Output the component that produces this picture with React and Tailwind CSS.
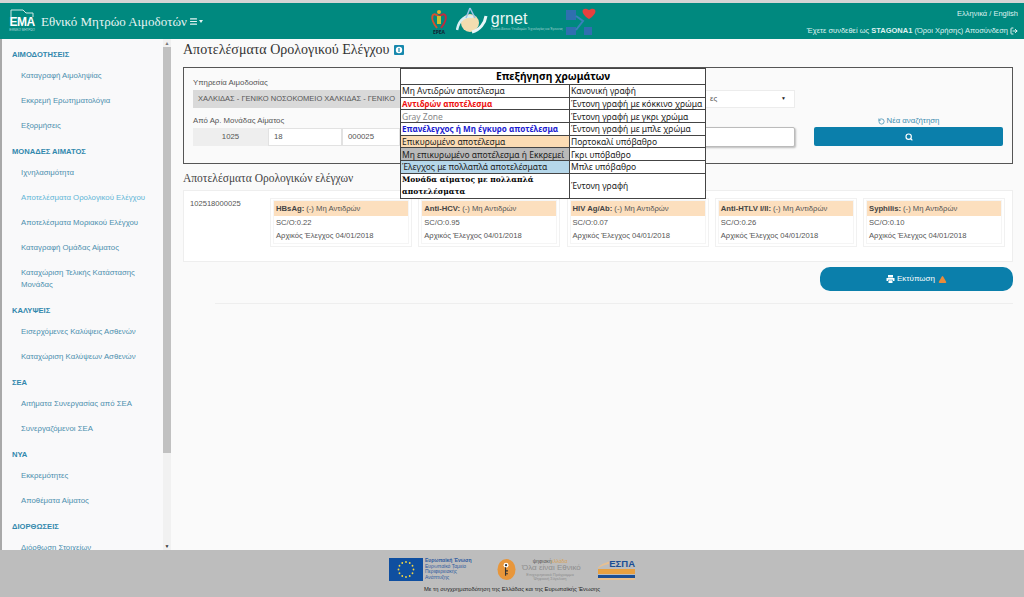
import React from "react";
import { Menu, LogOut, RotateCcw, Search, TriangleAlert } from "lucide-react";

const sans = "font-['Liberation_Sans',Arial,sans-serif]";

const menu = [
  {
    title: "ΑΙΜΟΔΟΤΗΣΕΙΣ",
    items: ["Καταγραφή Αιμοληψίας", "Εκκρεμή Ερωτηματολόγια", "Εξορμήσεις"],
  },
  {
    title: "ΜΟΝΑΔΕΣ ΑΙΜΑΤΟΣ",
    items: [
      "Ιχνηλασιμότητα",
      "Αποτελέσματα Ορολογικού Ελέγχου",
      "Αποτελέσματα Μοριακού Ελέγχου",
      "Καταγραφή Ομάδας Αίματος",
      "Καταχώριση Τελικής Κατάστασης Μονάδας",
    ],
  },
  {
    title: "ΚΑΛΥΨΕΙΣ",
    items: ["Εισερχόμενες Καλύψεις Ασθενών", "Καταχώριση Καλύψεων Ασθενών"],
  },
  {
    title: "ΣΕΑ",
    items: ["Αιτήματα Συνεργασίας από ΣΕΑ", "Συνεργαζόμενοι ΣΕΑ"],
  },
  {
    title: "ΝΥΑ",
    items: ["Εκκρεμότητες", "Αποθέματα Αίματος"],
  },
  {
    title: "ΔΙΟΡΘΩΣΕΙΣ",
    items: ["Διόρθωση Στοιχείων"],
  },
];

const tests = [
  { name: "HBsAg:", sco: "0.22" },
  { name: "Anti-HCV:", sco: "0.95" },
  { name: "HIV Ag/Ab:", sco: "0.07" },
  { name: "Anti-HTLV I/II:", sco: "0.26" },
  { name: "Syphilis:", sco: "0.10" },
];

const legend = [
  { left: "Μη Αντιδρών αποτέλεσμα", right: "Κανονική γραφή", cls: "text-[#222]" },
  { left: "Αντιδρών αποτέλεσμα", right: "Έντονη γραφή με κόκκινο χρώμα", cls: "text-[#ee1111] font-bold text-[8.1px]" },
  { left: "Gray Zone", right: "Έντονη γραφή με γκρι χρώμα", cls: "text-[#888]" },
  { left: "Επανέλεγχος ή Μη έγκυρο αποτέλεσμα", right: "Έντονη γραφή με μπλε χρώμα", cls: "text-[#1a1ad0] font-bold text-[8.1px]" },
  { left: "Επικυρωμένο αποτέλεσμα", right: "Πορτοκαλί υπόβαθρο", cls: "text-[#222] bg-[#fcdcb4]" },
  { left: "Μη επικυρωμένο αποτέλεσμα ή Εκκρεμεί", right: "Γκρι υπόβαθρο", cls: "text-[#222] bg-[#b9b9b9]" },
  { left: "Έλεγχος με πολλαπλά αποτελέσματα", right: "Μπλε υπόβαθρο", cls: "text-[#222] bg-[#b5d7ea]" },
];

const Sidebar = () => (
  <aside className={`flex w-[171px] shrink-0 overflow-hidden border-l-2 border-[#a9a9a9] bg-[#f9f9fa] ${sans}`}>
    <nav className="w-[161px] shrink-0 pl-[10px] pt-[2px]">
      {menu.map((group) => (
        <div key={group.title}>
          <div className="mt-[5px] flex h-[17px] items-center text-[7.6px] font-bold text-[#3288ad]">{group.title}</div>
          {group.items.map((item) => (
            <div
              key={item}
              className={`py-[6.5px] pl-[9px] pr-[10px] text-[7.8px] leading-[12px] ${
                item === "Αποτελέσματα Ορολογικού Ελέγχου" ? "text-[#62b5d6]" : "text-[#4c8fae]"
              }`}
            >
              {item}
            </div>
          ))}
        </div>
      ))}
    </nav>
    {/* scrollbar */}
    <div className="flex w-[8px] shrink-0 flex-col items-center bg-[#f1f1f1]">
      <div className="h-[8px] text-[5px] leading-[8px] text-[#777]">▲</div>
      <div className="h-[406px] w-full bg-[#c1c1c1]" />
      <div className="flex-1" />
      <div className="h-[8px] text-[5px] leading-[8px] text-[#333]">▼</div>
    </div>
  </aside>
);

const Legend = () => (
  <table className="absolute left-[400px] top-[68px] w-[306px] table-fixed border-collapse bg-white font-['Noto_Sans',sans-serif] text-[8.5px] leading-[11px] text-[#222]">
    <colgroup>
      <col className="w-[169px]" />
      <col />
    </colgroup>
    <tbody>
      <tr className="h-[16px]">
        <td colSpan={2} className="border border-[#444] text-center text-[10.3px] font-bold text-black">
          Επεξήγηση χρωμάτων
        </td>
      </tr>
      {legend.map((row) => (
        <tr key={row.left} className="h-[12.7px]">
          <td className={`whitespace-nowrap border border-[#444] pl-[1px] ${row.cls}`}>{row.left}</td>
          <td className="whitespace-nowrap border border-[#444] pl-[1px]">{row.right}</td>
        </tr>
      ))}
      <tr className="h-[25px]">
        <td className="border border-[#444] pl-[1px] font-['DejaVu_Serif',serif] text-[7.5px] font-bold leading-[12px] text-black">
          Μονάδα αίματος με πολλαπλά αποτελέσματα
        </td>
        <td className="border border-[#444] pl-[1px]">Έντονη γραφή</td>
      </tr>
    </tbody>
  </table>
);

const SearchBox = () => (
  <div className={`mt-[6px] flex h-[97px] overflow-hidden border border-[#555] bg-[#fafafa] pl-[9px] pt-[9px] text-[7.8px] text-[#555] ${sans}`}>
    {/* the legend table covers the middle of this row */}
    <div className="w-[207px] shrink-0">
      <div className="leading-[12px]">Υπηρεσία Αιμοδοσίας</div>
      <div className="mt-[1px] flex h-[18px] items-center whitespace-nowrap bg-[#d9d9d9] pl-[5px] text-[7.5px]">
        ΧΑΛΚΙΔΑΣ - ΓΕΝΙΚΟ ΝΟΣΟΚΟΜΕΙΟ ΧΑΛΚΙΔΑΣ - ΓΕΝΙΚΟ
      </div>
      <div className="mt-[7px] leading-[12px]">Από Αρ. Μονάδας Αίματος</div>
      <div className="mt-[1px] flex h-[18px]">
        <div className="flex w-[75px] items-center justify-center bg-[#eeeeee]">1025</div>
        <div className="flex w-[74px] items-center border border-[#e2e2e2] bg-white pl-[5px]">18</div>
        <div className="flex w-[58px] items-center border border-[#e2e2e2] bg-white pl-[5px]">000025</div>
      </div>
    </div>
    <div className="ml-[300px] w-[95px] shrink-0 pt-[13px]">
      <div className="flex h-[18px] items-center justify-between border border-[#ececec] bg-white pl-[9px] pr-[8px]">
        <span>ες</span>
        <span className="text-[5px] text-[#222]">▼</span>
      </div>
      <div className="mt-[19px] h-[20px] rounded-[2px] border border-[#bbb] bg-white shadow-[1px_1px_2px_rgba(0,0,0,0.25)]" />
    </div>
    <div className="ml-[19px] w-[189px] shrink-0 pt-[38px]">
      <div className="flex h-[12px] items-center justify-center gap-[2px] text-[#3a8cb0]">
        <RotateCcw size={7} strokeWidth={2.5} />
        Νέα αναζήτηση
      </div>
      <div className="flex h-[19px] items-center justify-center rounded-[2px] bg-[#0b7fab] text-white">
        <Search size={8} strokeWidth={3.5} />
      </div>
    </div>
  </div>
);

const ResultCard = ({ test }) => (
  <div className="h-[49px] w-[142px] shrink-0 border border-[#f1f1f1] px-[2px] pt-[1px]">
    <div className="border border-[#f5f5f5] pb-[1px]">
      <div className="flex h-[15px] items-center bg-[#fcdfbe] pl-[2px] text-[7.7px] text-[#555]">
        <b className="mr-[2px] text-[#444]">{test.name}</b> (-) Μη Αντιδρών
      </div>
      <div className="pl-[2px] leading-[13px]">SC/O:{test.sco}</div>
      <div className="pl-[2px] leading-[13px]">Αρχικός Έλεγχος 04/01/2018</div>
    </div>
  </div>
);

const Results = () => (
  <div className={`mt-[2px] flex h-[72px] border border-[#eeeeee] bg-white pl-[6px] pt-[6px] text-[7.6px] text-[#555] ${sans}`}>
    <div className="w-[80px] shrink-0 pt-[1px] leading-[12px]">102518000025</div>
    <div className="flex gap-[6.25px] pt-[1px]">
      {tests.map((test) => (
        <ResultCard key={test.name} test={test} />
      ))}
    </div>
  </div>
);

const Footer = () => (
  <footer className={`flex h-[47px] shrink-0 flex-col items-center bg-[#bdbdbd] ${sans}`}>
    <div className="flex h-[32px] items-center pt-[6px]">
      {/* EU flag */}
      <svg width="34" height="23" viewBox="0 0 34 23" className="shrink-0">
        <rect width="34" height="23" fill="#0f4fa0" />
        {Array.from({ length: 12 }).map((_, i) => (
          <circle
            key={i}
            cx={17 + 7.5 * Math.cos((i * Math.PI) / 6)}
            cy={11.5 + 7.5 * Math.sin((i * Math.PI) / 6)}
            r="0.9"
            fill="#f5d742"
          />
        ))}
      </svg>
      <div className="ml-[2px] w-[70px] text-[5px] leading-[5.5px] text-[#2d5a9e]">
        <div className="font-bold">Ευρωπαϊκή Ένωση</div>
        <div>Ευρωπαϊκό Ταμείο</div>
        <div>Περιφερειακής</div>
        <div>Ανάπτυξης</div>
      </div>
      {/* round logo */}
      <svg width="19" height="23" viewBox="0 0 20 23" className="ml-[2px] shrink-0">
        <ellipse cx="10" cy="11.5" rx="9.5" ry="11" fill="#e8963a" />
        <circle cx="9.5" cy="7" r="2.6" fill="#fff" />
        <circle cx="9.5" cy="7" r="1.2" fill="#333" />
        <path d="M9 9 L9 18 M9 13 L11.5 13 M9 16 L11.5 16" stroke="#333" strokeWidth="1.2" fill="none" />
      </svg>
      <div className="ml-[6px] w-[56px] text-center text-[#8d8d8d]">
        <div className="text-[5px] leading-[6px] text-[#555]">
          ψηφιακή<span className="text-[#d9a050]">ελλάδα</span>
        </div>
        <div className="whitespace-nowrap text-[8px] leading-[8px]">Όλα είναι Εθνικό</div>
        <div className="whitespace-nowrap text-[4px] leading-[5px]">Επιχειρησιακό Πρόγραμμα</div>
        <div className="whitespace-nowrap text-[4px] leading-[4px]">Ψηφιακή Σύγκλιση</div>
      </div>
      <div className="ml-[20px] w-[37px]">
        <div className="flex h-[11px] items-end justify-between">
          <svg width="13" height="9" viewBox="0 0 13 9">
            <path d="M0 8 C 4 4 8 3 13 1 L13 4 C 8 5 4 6 0 9 Z" fill="#e8c090" />
          </svg>
          <span className="text-[9.5px] font-bold leading-[11px] text-[#1b4e94]">ΕΣΠΑ</span>
        </div>
        <div className="h-[5px] bg-[#e8a040]" />
        <div className="mt-[1px] h-[3px] bg-[#1b4e94]" />
        <div className="h-[2px] bg-[#e8c090]" />
      </div>
    </div>
    <div className="mt-[3px] text-[5.8px] leading-[8px] text-[#222]">Με τη συγχρηματοδότηση της Ελλάδας και της Ευρωπαϊκής Ένωσης</div>
  </footer>
);

const Header = () => (
  <header className="flex h-[36px] shrink-0 items-center bg-[#00897f] pl-[10px] pr-[6px] text-white">
    <div className="relative flex h-[24px] w-[24px] flex-col items-center justify-end">
      {/* folder outline of the EMA logo */}
      <svg width="24" height="8" viewBox="0 0 24 8" className="absolute left-0 top-0">
        <path d="M1 8 L1 1 L13 1 L16 4 L23 4 L23 8" fill="none" stroke="#cfe8e6" strokeWidth="1" />
      </svg>
      <span className={`text-[12px] font-bold leading-[12px] tracking-[-0.5px] ${sans}`}>EMA</span>
      <span className={`whitespace-nowrap text-[3px] leading-[5px] text-white/70 ${sans}`}>ΕΘΝΙΚΟ ΜΗΤΡΩΟ</span>
    </div>
    <div className="ml-[7px] flex items-center font-['Liberation_Serif',serif] text-[13px] leading-none text-[#e6f3f2]">
      Εθνικό Μητρώο Αιμοδοτών
      <Menu size={9} strokeWidth={3} className="ml-[2px]" />
      <span className="ml-[1px] h-0 w-0 border-x-[2.5px] border-t-[3px] border-x-transparent border-t-[#e6f3f2]" />
    </div>
    {/* partner logos */}
    <div className="ml-[226px] flex h-full items-center">
      <svg width="20" height="30" viewBox="0 0 20 30" className="mr-[7px]">
        <path d="M10 11 C 3 4 0 12 8 22" fill="none" stroke="#d9502e" strokeWidth="2" />
        <path d="M10 11 C 17 4 20 12 12 22" fill="none" stroke="#c22b3d" strokeWidth="2" />
        <circle cx="10" cy="6" r="2" fill="#e8b030" />
        <rect x="8" y="10" width="4" height="8" fill="#c9c030" />
        <text x="10" y="28" textAnchor="middle" fontSize="5" fontWeight="700" fill="#123">ΕΡΕΑ</text>
      </svg>
      <svg width="32" height="30" viewBox="0 0 32 30">
        <circle cx="14" cy="17" r="9" fill="#f3ddb0" />
        <path d="M1 24 C 3 13 10 9 17 11" fill="none" stroke="#d9eef2" strokeWidth="2.5" />
        <path d="M16 26 C 24 24 29 17 30 10" fill="none" stroke="#e8f6f8" strokeWidth="3" />
        <path d="M14 2 L10 12 M14 2 L19 12" stroke="#9bc3e8" strokeWidth="1.5" fill="none" />
      </svg>
      <div className={`ml-[3px] mt-[-1px] flex w-[64px] flex-col ${sans}`}>
        <span className="text-[16px] leading-[17px] text-[#eaf6f5]">grnet</span>
        <span className="whitespace-nowrap text-[3.2px] leading-[4px] text-white/60">Εθνικό Δίκτυο Υποδομών Τεχνολογίας και Έρευνας</span>
      </div>
      <svg width="30" height="30" viewBox="0 0 30 30" className="ml-[11px]">
        <rect x="0" y="4" width="10" height="10" fill="#2f6fb0" />
        <rect x="0" y="21" width="10" height="8" fill="#2f6fb0" />
        <rect x="18" y="21" width="8" height="8" fill="#2f6fb0" />
        <path d="M10 10 L17 15 L10 24" stroke="#3a80bb" strokeWidth="2" fill="none" />
        <path d="M23 13 C 13 7 16 0 23 4 C 30 0 33 7 23 13 Z" fill="#e5403f" />
      </svg>
    </div>
    <div className={`ml-auto flex h-full flex-col items-end justify-between py-[3px] text-[7.5px] leading-[10px] text-[#dff1f0] ${sans}`}>
      <div className="pt-[3px]">Ελληνικά / English</div>
      <div className="flex items-center">
        Έχετε συνδεθεί ως&nbsp;<b>STAGONA1</b>&nbsp;(Όροι Χρήσης) Αποσύνδεση
        <LogOut size={8} strokeWidth={3} className="ml-[2px]" />
      </div>
    </div>
  </header>
);

export default function App() {
  return (
    <div className="relative flex h-[597px] w-[1024px] flex-col overflow-hidden bg-[#d5d5d5] pt-[3px]">
      <Header />
      <div className="flex min-h-0 flex-1">
        <Sidebar />
        <main className="min-w-0 flex-1 bg-[#fafafa] pl-[12px] pr-[11px]">
          <div className="flex h-[22px] items-center">
            <h1 className="font-['Liberation_Serif',serif] text-[14px] font-normal leading-none text-[#333]">
              Αποτελέσματα Ορολογικού Ελέγχου
            </h1>
            <svg width="10" height="10" viewBox="0 0 10 10" className="ml-[5px]">
              <rect width="10" height="10" rx="1" fill="#1788ad" />
              <circle cx="5" cy="5" r="3.2" fill="#fff" />
              <rect x="4.4" y="3" width="1.2" height="4" fill="#1788ad" />
            </svg>
          </div>
          <SearchBox />
          <h2 className="mt-[5px] h-[19px] font-['Liberation_Serif',serif] text-[11.5px] font-normal leading-[19px] text-[#444]">
            Αποτελέσματα Ορολογικών ελέγχων
          </h2>
          <Results />
          <div className="mt-[5px] flex justify-end">
            <button className={`flex h-[24px] w-[193px] items-center justify-center gap-[2px] rounded-[10px] bg-[#0b7fab] text-[8px] text-white ${sans}`}>
              <svg width="9" height="8" viewBox="0 0 9 8" fill="#fff">
                <rect x="2" y="0" width="5" height="2.5" />
                <path d="M0.5 3 H8.5 V6 H7 V4.8 H2 V6 H0.5 Z" />
                <rect x="2.5" y="5.3" width="4" height="2.7" />
              </svg>
              Εκτύπωση
              <TriangleAlert size={9} strokeWidth={0} fill="#e98b3a" className="ml-[1px]" />
            </button>
          </div>
          <div className="ml-[32px] mt-[12px] h-px bg-[#eeeeee]" />
        </main>
      </div>
      <Legend />
      <Footer />
    </div>
  );
}
